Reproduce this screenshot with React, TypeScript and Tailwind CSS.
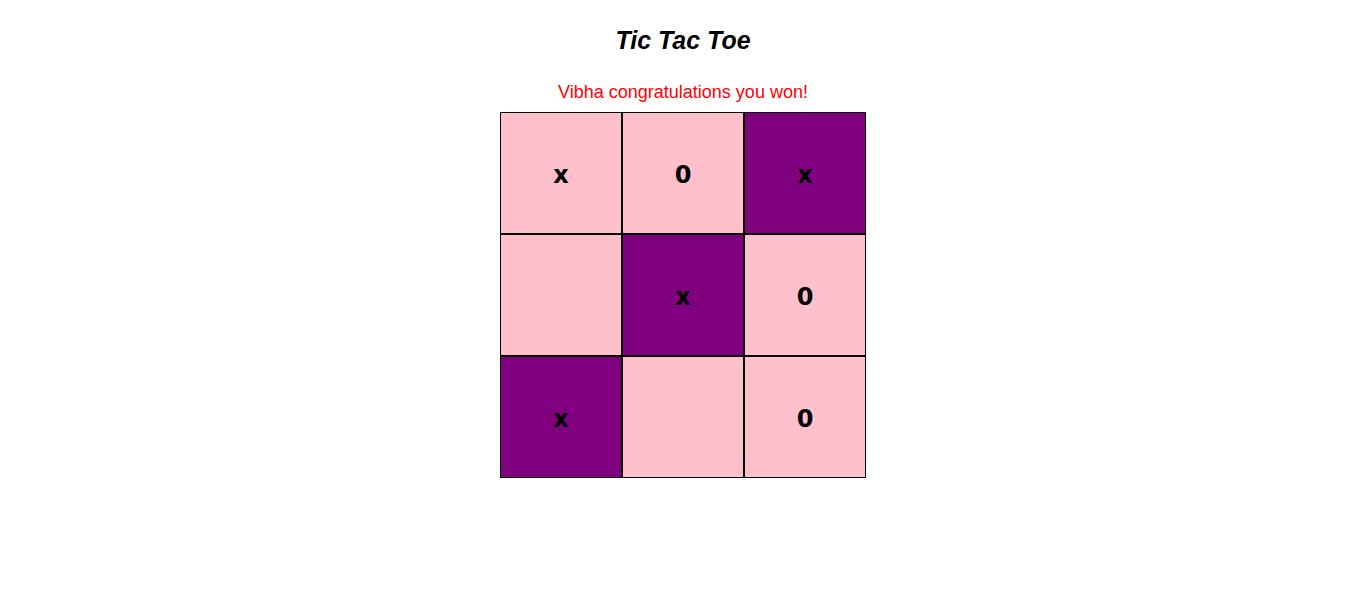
import React from "react";

const cells: { v: string; win: boolean }[] = [
  { v: "x", win: false },
  { v: "0", win: false },
  { v: "x", win: true },
  { v: "", win: false },
  { v: "x", win: true },
  { v: "0", win: false },
  { v: "x", win: true },
  { v: "", win: false },
  { v: "0", win: false },
];

export default function App() {
  return (
    <div className="min-h-[596px] w-full bg-white flex flex-col items-center" style={{ fontFamily: '"Liberation Sans", Arial, sans-serif' }}>
      <div className="mt-[28px] text-[25px] leading-[25px] font-bold italic text-black">Tic Tac Toe</div>
      <div className="mt-[30px] text-[18px] leading-[18px] text-[#ff0000]">Vibha congratulations you won!</div>
      <div className="mt-[11px] grid grid-cols-[repeat(3,122px)]">
        {cells.map((c, i) => (
          <div
            key={i}
            className={`w-[122px] h-[122px] border border-black flex items-center justify-center pt-[3px] text-[24px] font-bold text-black ${c.win ? "bg-[#800080]" : "bg-[#ffc0cb]"}`}
            style={{ fontFamily: '"DejaVu Sans", Verdana, sans-serif' }}
          >
            {c.v}
          </div>
        ))}
      </div>
    </div>
  );
}
